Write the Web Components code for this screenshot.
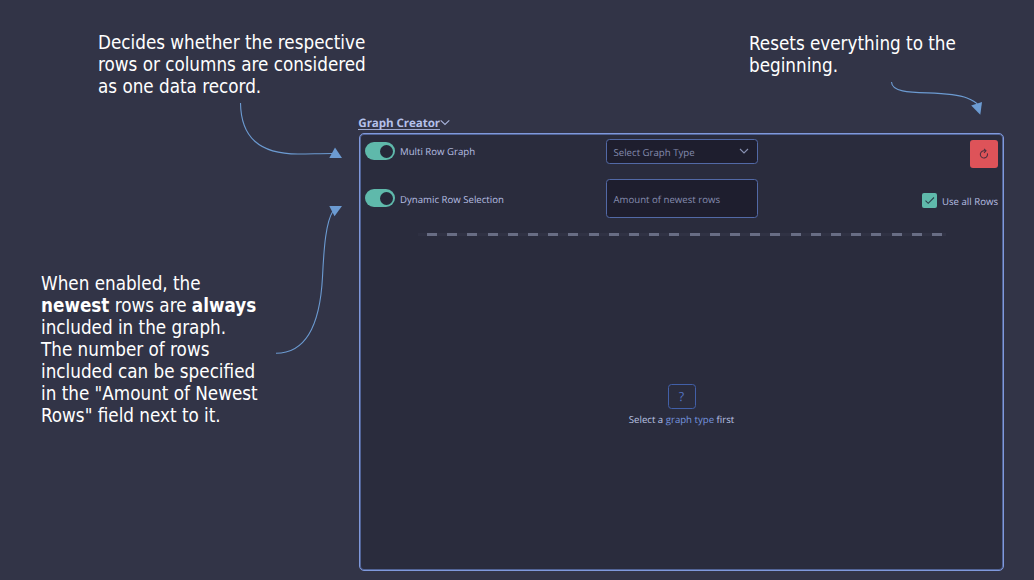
<!DOCTYPE html>
<html lang="en"><head><meta charset="utf-8"><title>Graph Creator</title>
<style>html,body{margin:0;height:100%;overflow:hidden;background:#323447}</style></head>
<body>
<guide-stage>
  <guide-note slot="left" style="--w:290px;--gap:32px 0 0 98px">Decides whether the respective<br>rows or columns are considered<br>as one data record.</guide-note>
  <guide-note slot="left" style="--w:240px;--gap:175px 0 0 41px">When enabled, the<br><b>newest</b> rows are <b>always</b><br>included in the graph.<br>The number of rows<br>included can be specified<br>in the "Amount of Newest<br>Rows" field next to it.</guide-note>
  <guide-note slot="top" style="--w:230px;--gap:33px 0 0 390px">Resets everything to the<br>beginning.</guide-note>
  <graph-creator></graph-creator>
</guide-stage>
<script>
const define = (name, html) => customElements.define(name, class extends HTMLElement {
  constructor() { super(); this.attachShadow({ mode: 'open' }).innerHTML = html; }
});

define('guide-note', `<style>
:host{display:block;box-sizing:border-box;width:var(--w);margin:var(--gap);font:18.7px/22px "DejaVu Sans Condensed","DejaVu Sans",sans-serif;font-stretch:condensed;color:#fff;white-space:nowrap}
</style><slot></slot>`);

define('guide-arrows', `<style>:host{display:block;position:absolute;inset:0;pointer-events:none}svg{display:block}</style>
<svg width="1034" height="580" fill="none" stroke="#6c9bd2" stroke-width="1.1">
<path d="M240.5 103C241 137 259 154 298 154C311 154 319 153.500 333 153.500"/>
<path d="M276 353.300C306 353.300 320 325 322.500 277C324 246 326 222 333 211"/>
<path d="M891.500 82C892 99 943 88 967 98C972 100 976 102 978 105"/>
<g fill="#6c9bd2" stroke="none"><path d="M335 147.500L342 158H329.300Z"/><path d="M329.300 206H342L334.500 216.300Z"/><path d="M971.200 105.600L982 102L980.300 114.800Z"/></g>
</svg>`);

define('toggle-row', `<style>
:host{display:flex;align-items:center;gap:5px;height:18px;white-space:nowrap}
i{box-sizing:border-box;width:30px;height:18px;border-radius:9px;background:#5fb9ab;padding:2.500px 2.500px;display:flex;justify-content:flex-end}
i::after{content:"";width:13px;height:13px;border-radius:50%;background:#262839}
span{position:relative;top:var(--dy,0)}
</style><i></i><span><slot></slot></span>`);

define('field-box', `<style>
:host{display:flex;box-sizing:border-box;width:152px;height:var(--h);border:1px solid #5269a6;border-radius:3.500px;background:#1e1e2e;align-items:center;justify-content:space-between;padding:2px 8px 0 6.500px;color:#858cae;white-space:nowrap}
</style><slot></slot><slot name="icon"></slot>`);

define('reset-button', `<style>
:host{display:flex;width:28px;height:28px;border-radius:3px;background:#de5359;align-items:center;justify-content:center}
</style><svg width="12" height="12" viewBox="0 0 12 12" fill="none" stroke="#51303f" stroke-width="1.100"><path d="M9.400 5.400A3.600 3.600 0 1 1 5.500 2.800H8"/><path d="M6 .8L8 2.800L6 4.800"/></svg>`);

define('check-row', `<style>
:host{display:flex;align-items:center;gap:5px;white-space:nowrap}
i{display:flex;width:15px;height:15px;border-radius:2px;background:#5fb9ab}
span{position:relative;top:1px}
</style><i><svg width="15" height="15" fill="none" stroke="#28404b" stroke-width="1.100"><path d="M3.500 7.700L6.200 10.300L12 4.500"/></svg></i><span><slot></slot></span>`);

define('dash-divider', `<style>
:host{display:block;width:528px;height:3px;background:repeating-linear-gradient(90deg,#686d84 0 10px,#303244 10px 20.200px) 9px 0/519px 3px no-repeat,#2e3042}
</style>`);

define('empty-state', `<style>
:host{display:flex;flex-direction:column;align-items:center;gap:3px;white-space:nowrap;color:#bac3e4}
i{box-sizing:border-box;width:28px;height:25px;border:1px solid #4260a8;border-radius:3.500px;display:flex;align-items:center;justify-content:center;font:12.500px/1 "Open Sans",sans-serif;color:#5474c4;padding-top:1px}
p{margin:1px 0 0;line-height:14px}
</style><i>?</i><p><slot></slot></p>`);

define('graph-creator', `<style>
:host{display:flex;flex-direction:column;font:9.640px/14px "Open Sans","Noto Sans",sans-serif;color:#b6bfe2;text-rendering:geometricPrecision}
header{height:20px;display:flex;align-items:flex-start}
h1{margin:5px 0 0 -.7px;font-size:11.600px;line-height:11px;height:11px;font-weight:700;letter-spacing:-.07px;color:#b4c0ea;border-bottom:1px solid #9da9d2;white-space:nowrap}
header svg{margin-top:4px}
main{box-sizing:border-box;width:645px;height:438px;border:1px solid #8099dc;box-shadow:inset 0 0 0 1px #526496;border-radius:5px;background:#2a2c3d;display:flex;flex-direction:column;align-items:center}
.r{box-sizing:border-box;width:100%;display:grid;grid-template-columns:241px 152px 1fr;padding:0 5px 0 5px;align-items:start}
.r>:last-child{justify-self:end}
.a{padding-top:5px;height:45px}.b{height:54px}
.a toggle-row{margin-top:3.400px}.b toggle-row{margin-top:10.400px}
.b check-row{margin-top:14px}
empty-state{margin-top:148px}
em{font-style:normal;color:#7594df}
</style>
<header><h1>Graph Creator</h1><svg width="10" height="12" fill="none" stroke="#a8b4dc" stroke-width="1.100"><path d="M.7 3.300L5 7.400L9.300 3.300"/></svg></header>
<main>
<div class="r a"><toggle-row style="--dy:1px">Multi Row Graph</toggle-row><field-box style="--h:25px">Select Graph Type<svg slot="icon" width="10" height="9" fill="none" stroke="#8991b3" stroke-width="1.100"><path d="M1 1L5 5L9 1"/></svg></field-box><reset-button style="margin-top:1px"></reset-button></div>
<div class="r b"><toggle-row style="--dy:1.500px">Dynamic Row Selection</toggle-row><field-box style="--h:39px">Amount of newest rows</field-box><check-row>Use all Rows</check-row></div>
<dash-divider></dash-divider>
<empty-state>Select a <em>graph type</em> first</empty-state>
</main>`);

define('guide-stage', `<style>
:host{position:relative;display:grid;width:1034px;height:580px;grid-template-columns:359px 1fr;background:#323447}
.l{min-width:0}.top{height:113px;display:flex}
</style>
<section class="l"><slot name="left"></slot></section>
<section><div class="top"><slot name="top"></slot></div><slot></slot></section>
<guide-arrows></guide-arrows>`);
</script>
</body></html>
